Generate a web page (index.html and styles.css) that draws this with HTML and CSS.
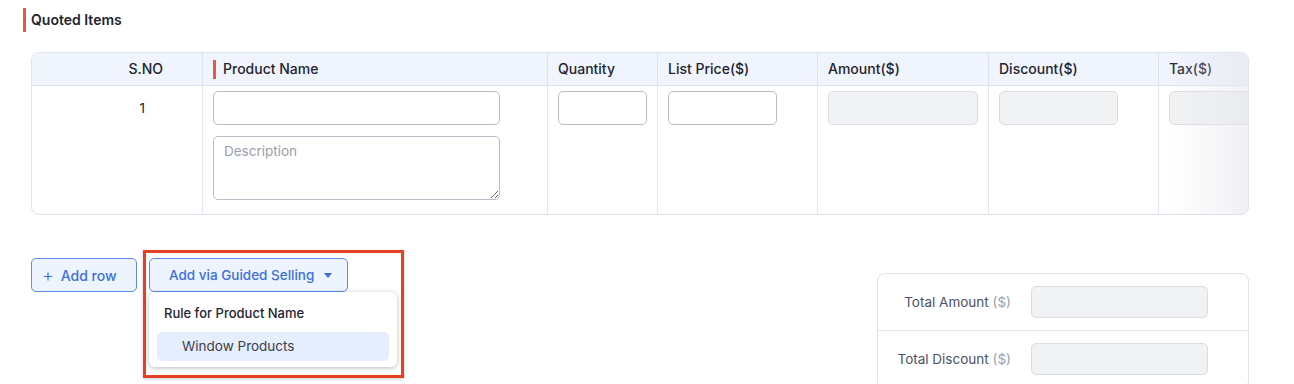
FILE: index.html
```html
<html>
<head>
	<title>Quoted Items</title>
	<link rel="stylesheet" href="styles.css">
	<meta name="viewport" content="width=device-width, initial-scale=1.0">
</head>
<body>
	<div class="page">
		<h3 class="sectionTitle">Quoted Items</h3>

		<div class="itemsCard">
			<div class="itemsGrid">
				<div class="th snoHead">S.NO</div>
				<div class="th"><span class="reqMark"></span>Product Name</div>
				<div class="th">Quantity</div>
				<div class="th">List Price($)</div>
				<div class="th">Amount($)</div>
				<div class="th">Discount($)</div>
				<div class="th">Tax($)</div>

				<div class="td snoCell">1</div>
				<div class="td productCell">
					<input type="text" class="field fieldProduct">
					<textarea class="field fieldDesc" placeholder="Description"></textarea>
				</div>
				<div class="td"><input type="text" class="field fieldQty"></div>
				<div class="td"><input type="text" class="field fieldPrice"></div>
				<div class="td"><input type="text" class="field readOnly fieldAmount" disabled></div>
				<div class="td"><input type="text" class="field readOnly fieldDiscount" disabled></div>
				<div class="td"><input type="text" class="field readOnly fieldTax" disabled></div>
			</div>
			<div class="scrollFade"></div>
		</div>

		<div class="bottomRow">
			<div class="actions">
				<button class="actionBtn addRow"><span class="plus">+</span>Add row</button>
				<div class="guidedBox">
					<button class="actionBtn guidedBtn">Add via Guided Selling<span class="caret"></span></button>
					<div class="guidedMenu">
						<div class="menuHead">Rule for Product Name</div>
						<div class="menuItem">Window Products</div>
					</div>
				</div>
			</div>

			<div class="totalsCard">
				<div class="totalRow">
					<label class="totalLabel">Total Amount <span class="cur">($)</span></label>
					<input type="text" class="field readOnly totalField" disabled>
				</div>
				<div class="totalRow">
					<label class="totalLabel">Total Discount <span class="cur">($)</span></label>
					<input type="text" class="field readOnly totalField" disabled>
				</div>
			</div>
		</div>
	</div>
</body>
</html>
```

FILE: styles.css
```css
	body {
		margin: 0;
		background-color: white;
		color: #1f2430;
		font-family: Inter, "Noto Sans", Arial, sans-serif;
		font-size: 13px;
		overflow: hidden;
	}

	.page {
		padding: 8px 45px 0 31px;
	}

	.sectionTitle {
		margin: 0 0 20px -8px;
		padding-left: 5px;
		border-left: 3px solid #e8574a;
		height: 24px;
		line-height: 23px;
		font-size: 14px;
		font-weight: 600;
		color: #1f2430;
	}

	.itemsCard {
		position: relative;
		border: 1px solid #dce2ee;
		border-radius: 8px;
		overflow: hidden;
	}

	.itemsGrid {
		display: grid;
		grid-template-columns: 170px 345px 110px 160px 171px 170px 1fr;
	}

	.th {
		height: 32px;
		line-height: 32px;
		padding-left: 10px;
		background-color: #f0f4fd;
		border-bottom: 1px solid #dce2ee;
		border-left: 1px solid #dce2ee;
		font-size: 14px;
		font-weight: 500;
		white-space: nowrap;
	}

	.th:first-child, .td.snoCell {
		border-left: none;
	}

	.snoHead {
		text-align: right;
		padding-right: 39px;
	}

	.reqMark {
		display: inline-block;
		width: 3px;
		height: 19px;
		background-color: #e8574a;
		vertical-align: middle;
		margin: -2px 7px 0 0;
	}

	.td {
		padding: 5px 0 0 10px;
		border-left: 1px solid #e3e7ef;
		box-sizing: border-box;
		height: 128px;
		overflow: hidden;
	}

	.snoCell {
		text-align: right;
		padding: 14px 57px 0 0;
		font-size: 13.5px;
	}

	.productCell {
		display: flex;
		flex-direction: column;
		gap: 11px;
	}

	.field {
		display: block;
		box-sizing: border-box;
		height: 34px;
		border: 1px solid #b9bdc8;
		border-radius: 5px;
		background-color: white;
		font-family: inherit;
		font-size: 13.5px;
		padding: 6px 10px;
	}

	.field.readOnly {
		background-color: #f1f2f4;
		border-color: #dadde3;
	}

	.fieldProduct { width: 287px; }
	.fieldDesc {
		width: 287px;
		height: 64px;
		resize: vertical;
		color: #1f2430;
	}
	.fieldDesc::placeholder { color: #9aa0ae; }
	.fieldQty { width: 89px; }
	.fieldPrice { width: 109px; }
	.fieldAmount { width: 150px; }
	.fieldDiscount { width: 119px; }
	.fieldTax { width: 150px; }

	.scrollFade {
		position: absolute;
		top: 0;
		right: 0;
		bottom: 0;
		width: 80px;
		background: linear-gradient(to right, rgba(255,255,255,0), rgba(228,229,234,0.55));
		pointer-events: none;
	}

	.bottomRow {
		display: flex;
		justify-content: space-between;
		align-items: flex-start;
		margin-top: 35px;
	}

	.actions {
		display: flex;
		align-items: flex-start;
		gap: 6px;
	}

	.actionBtn {
		box-sizing: border-box;
		height: 34px;
		border: 1px solid #5a8cf0;
		border-radius: 5px;
		background-color: #eef4fe;
		color: #3d6fdb;
		font-family: inherit;
		font-size: 14px;
		font-weight: 500;
		cursor: pointer;
	}

	.addRow {
		margin-top: 8px;
		width: 106px;
		padding: 0 10px;
		text-align: left;
	}

	.plus {
		font-size: 18px;
		font-weight: 300;
		vertical-align: -1px;
		margin-right: 7px;
	}

	.guidedBox {
		display: flex;
		flex-direction: column;
		align-items: flex-start;
		border: 3px solid #e5401f;
		padding: 5px 4px 8px 3px;
		box-shadow: 0 1px 3px rgba(0,0,0,0.2);
	}

	.guidedBtn {
		width: 199px;
		padding: 0 0 0 19px;
		text-align: left;
		font-size: 13.5px;
	}

	.caret {
		display: inline-block;
		border-left: 4px solid transparent;
		border-right: 4px solid transparent;
		border-top: 5px solid #3d6fdb;
		vertical-align: 2px;
		margin-left: 10px;
	}

	.guidedMenu {
		width: 248px;
		box-sizing: border-box;
		padding: 8px 8px 6px 8px;
		background-color: white;
		border-radius: 6px;
		box-shadow: 0 1px 5px rgba(0,0,0,0.28);
	}

	.menuHead {
		padding: 5px 7px 0 7px;
		height: 27px;
		font-weight: 500;
		color: #1f2430;
	}

	.menuItem {
		height: 29px;
		line-height: 29px;
		padding-left: 25px;
		border-radius: 5px;
		background-color: #e5eefc;
		color: #3a3f4c;
		font-size: 13.5px;
	}

	.totalsCard {
		margin-top: 23px;
		width: 372px;
		box-sizing: border-box;
		border: 1px solid #dce2ee;
		border-radius: 8px;
	}

	.totalRow {
		display: flex;
		align-items: center;
		gap: 20px;
		padding: 12px 0;
		border-bottom: 1px solid #e3e7ef;
	}

	.totalLabel {
		width: 133px;
		text-align: right;
		color: #4a5168;
		font-size: 13.5px;
	}

	.cur {
		color: #9aa0b0;
	}

	.totalField {
		width: 177px;
		height: 32px;
	}
```
